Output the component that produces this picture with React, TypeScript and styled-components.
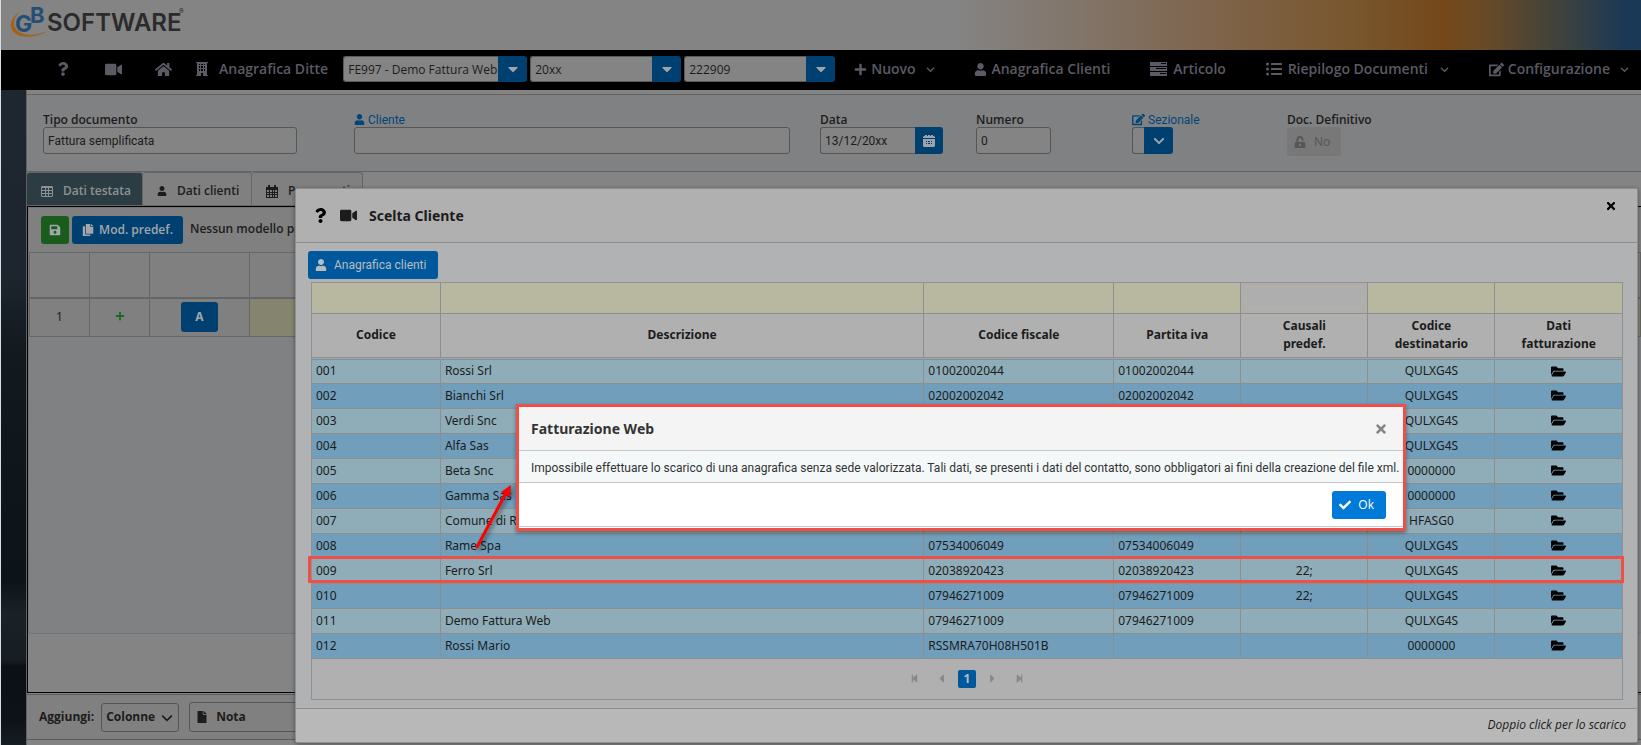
import React from 'react';
import styled, { createGlobalStyle, css } from 'styled-components';
import {
  FaQuestion, FaVideo, FaHome, FaPlus, FaUser, FaListUl, FaEdit,
  FaChevronDown, FaCaretDown, FaUnlockAlt, FaSave, FaCopy,
  FaFile, FaFolderOpen, FaCheck, FaTimes, FaStepBackward, FaStepForward, FaCaretLeft, FaCaretRight,
} from 'react-icons/fa';

const uiFont = 'Roboto, "Noto Sans", sans-serif';
const labelFont = '"Open Sans", "Noto Sans", sans-serif';
const dataFont = '"Noto Sans", "Open Sans", sans-serif';

const Global = createGlobalStyle`
  * { box-sizing: border-box; }
  html, body { margin: 0; }
  body {
    background: #848484;
    color: #1c1c1c;
    font: 12px/18px ${dataFont};
    overflow: hidden;
  }
  button, input, select { font: inherit; color: inherit; margin: 0; }
  button { cursor: pointer; }
  svg { flex: none; }
`;

const Page = styled.div`
  min-height: 100vh;
  display: flex;
  flex-direction: column;
  border-left: 1px solid #dadcde;
`;

const Banner = styled.header`
  height: 50px;
  padding: 4px 0 0 8px;
  background: linear-gradient(90deg, #848484 58%, #7f664f 73%, #78552c 83%, #74481a 88%, #6c4a24 90%, #40423c 95%, #1a3956 99%);
`;

const Nav = styled.nav`
  height: 40px;
  display: flex;
  align-items: center;
  background: #000;
  color: #5c5a64;
  padding: 0 12px 2px 55px;
  font-family: ${labelFont};
  font-size: 14px;
  font-weight: 600;
`;

const NavLink = styled.a<{ $gap?: number; $after?: number }>`
  display: flex;
  align-items: center;
  gap: ${p => p.$gap ?? 4}px;
  margin-right: ${p => p.$after ?? 0}px;
  color: inherit;
  text-decoration: none;
  white-space: nowrap;
`;

const NavGroup = styled.div`
  flex: 1;
  display: flex;
  justify-content: space-between;
  margin-left: 16px;
`;

const Chevron = styled.span`
  display: flex;
  margin-left: 6px;
`;

const Combo = styled.div<{ $w: number }>`
  display: flex;
  width: ${p => p.$w}px;
  height: 26px;
  margin-right: 3px;
  font-size: 12px;
  font-weight: 400;
  color: #1c1c1c;
`;

const ComboInput = styled.input`
  flex: 1;
  min-width: 0;
  padding: 2px 0 0 4px;
  border: 1px solid #5a5a5a;
  border-right: 0;
  border-radius: 3px 0 0 3px;
  background: #848484;
`;

const ComboButton = styled.button<{ $w?: number }>`
  width: ${p => p.$w ?? 29}px;
  padding: 0;
  display: flex;
  align-items: center;
  justify-content: center;
  border: 0;
  border-radius: 0 3px 3px 0;
  background: #004071;
  color: #a0a4a8;
`;

const Body = styled.div`
  flex: 1;
  display: flex;
`;

const Side = styled.aside`
  width: 25px;
  background: linear-gradient(180deg, #1e272f 0, #1d262e 28%, #12191f 40%, #0e151b 60%, #0c1319 75%, #1a2127 80%, #161d23 87%, #0a1016 88%, #0c1218 96%, #161d23 100%);
`;

const Main = styled.main`
  flex: 1;
  min-width: 0;
  display: flex;
  flex-direction: column;
  border-left: 1px solid #5e6163;
`;

const Form = styled.form`
  display: flex;
  height: 78px;
  margin-top: 4px;
  padding: 17px 0 0 16px;
  border: solid #636363;
  border-width: 1px 0;
  background: #808182;
`;

const Field = styled.div<{ $w: number; $after: number }>`
  width: ${p => p.$w}px;
  margin-right: ${p => p.$after}px;
`;

const Label = styled.label<{ $link?: boolean }>`
  display: flex;
  align-items: center;
  gap: 3px;
  height: 15px;
  white-space: nowrap;
  font-family: ${p => (p.$link ? uiFont : labelFont)};
  font-weight: ${p => (p.$link ? 400 : 600)};
  color: ${p => (p.$link ? '#00457c' : '#1c1c1c')};
`;

const inputBox = css`
  height: 27px;
  border: 1px solid #565656;
  border-radius: 3px;
  background: #848484;
`;

const TextInput = styled.input`
  ${inputBox}
  width: 100%;
  padding: 0 4px;
  font-family: ${uiFont};
`;

const Joined = styled.div`
  display: flex;
  & > input { flex: 1; min-width: 0; border-right: 0; border-radius: 3px 0 0 3px; }
`;

const Toggle = styled.button`
  display: flex;
  align-items: center;
  gap: 8px;
  width: 54px;
  height: 29px;
  padding: 0 7px;
  border: 0;
  border-radius: 3px;
  background: #787878;
  color: #565656;
`;

const Tabs = styled.div`
  display: flex;
  height: 34px;
`;

const Tab = styled.button<{ $active?: boolean; $w: number }>`
  display: flex;
  align-items: center;
  gap: 10px;
  width: ${p => p.$w}px;
  padding: 4px 0 0 14px;
  border: 1px solid #666;
  border-left: 0;
  border-radius: 3px 3px 0 0;
  background: ${p => (p.$active ? '#2b3d43' : '#808080')};
  color: ${p => (p.$active ? '#8c9294' : '#1c1c1c')};
  font-family: ${labelFont};
  font-weight: 600;
  white-space: nowrap;
`;

const Panel = styled.section`
  height: 487px;
  border: 1px solid #000;
  border-right: 0;
  background: #848484;
`;

const Inner = styled.div`
  height: 427px;
  border: 1px solid #747474;
  border-right: 0;
  border-radius: 3px;
  background: #808182;
`;

const Tools = styled.div`
  display: flex;
  gap: 3px;
  height: 44px;
  padding: 8px 12px;
  background: #808080;
  font-family: ${labelFont};
  font-weight: 600;
`;

const ToolButton = styled.button<{ $green?: boolean; $w: number }>`
  display: flex;
  align-items: center;
  justify-content: center;
  gap: 5px;
  width: ${p => p.$w}px;
  height: 28px;
  padding: 0;
  border: 0;
  border-radius: 3px;
  background: ${p => (p.$green ? '#1a5c1c' : '#004071')};
  color: #a3a7ab;
  font-weight: 600;
  white-space: nowrap;
`;

const ToolText = styled.span`
  margin-left: 4px;
  line-height: 26px;
  white-space: nowrap;
`;

const Grid = styled.table`
  width: 100%;
  table-layout: fixed;
  border-collapse: collapse;
  background: #808080;
  th, td { border: 1px solid #666; padding: 0; text-align: center; }
  th { height: 45px; border-bottom-width: 2px; }
  td { height: 39px; }
  td:last-child { background: #84846f; }
`;

const RowButton = styled.button`
  width: 37px;
  height: 30px;
  border: 0;
  border-radius: 3px;
  background: #004071;
  color: #a3a7ab;
  font-weight: 700;
`;

const AddBar = styled.footer`
  display: flex;
  align-items: center;
  height: 46px;
  margin-top: 1px;
  padding-left: 12px;
  border: solid #5c5c5c;
  border-width: 1px 0;
  background: #808080;
  font-family: ${labelFont};
  font-weight: 700;
`;

const OutlineSelect = styled.div`
  position: relative;
  width: 78px;
  margin: 0 10px 0 7px;
  & > svg { position: absolute; right: 6px; top: 9px; pointer-events: none; }
  & > select {
    width: 100%;
    height: 29px;
    padding: 0 4px;
    appearance: none;
    border: 1px solid #555;
    border-radius: 3px;
    background: transparent;
  }
`;

const OutlineButton = styled.button`
  display: flex;
  align-items: center;
  gap: 8px;
  width: 160px;
  height: 30px;
  padding: 0 6px;
  border: 1px solid #555;
  border-radius: 3px;
  background: transparent;
  font-weight: 700;
`;

const Modal = styled.section`
  position: absolute;
  left: 295px;
  right: 3px;
  top: 188px;
  display: flex;
  flex-direction: column;
  border: 1px solid #8f8f8f;
  border-radius: 3px;
  background: #b1b2b4;
  box-shadow: 0 1px 4px #0006;
`;

const ModalHead = styled.header`
  display: flex;
  align-items: center;
  gap: 12px;
  height: 54px;
  padding: 0 20px 0 17px;
  border-bottom: 1px solid #8e8e8e;
  background: #b0b0b0;
`;

const Title = styled.h2`
  flex: 1;
  margin: 0;
  font-size: 14px;
  font-weight: 700;
`;

const IconButton = styled.button<{ $top?: boolean }>`
  display: flex;
  align-self: ${p => (p.$top ? 'flex-start' : 'center')};
  padding: ${p => (p.$top ? '11px 0 0' : '0')};
  border: 0;
  background: none;
`;

const ModalBody = styled.div`
  padding: 8px 14px 8px 12px;
`;

const PrimaryButton = styled.button<{ $bright?: boolean }>`
  display: flex;
  align-items: center;
  gap: 7px;
  height: 28px;
  padding: 0 12px 0 7px;
  border: 0;
  border-radius: 3px;
  background: ${p => (p.$bright ? '#007ad9' : '#00589c')};
  color: ${p => (p.$bright ? '#fff' : '#b8bcc0')};
  font-family: ${p => (p.$bright ? labelFont : uiFont)};
`;

const TableWrap = styled.div`
  margin: 3px 0 0 3px;
  border: 1px solid #919191;
  background: #b0b0b0;
`;

const Table = styled.table`
  width: 100%;
  table-layout: fixed;
  border-collapse: collapse;
  th, td { padding: 0; border: 1px solid #8e8e8e; }
  tr > :first-child { border-left: 0; }
  tr > :last-child { border-right: 0; }
  thead tr:first-child > * { border-top: 0; }
  th { height: 45px; font-weight: 700; }
  thead tr:last-child th { border-bottom: 3px double #8e8e8e; }
`;

const FilterCell = styled.td<{ $plain?: boolean }>`
  height: 30px;
  background: ${p => (p.$plain ? '#aeaeae' : '#b8b7a0')};
`;

const FilterInput = styled.input<{ $plain?: boolean }>`
  display: block;
  width: calc(100% - 8px);
  height: 23px;
  margin: 0 auto;
  border: 1px solid ${p => (p.$plain ? '#b6b4a0' : 'transparent')};
  border-radius: 3px;
  background: transparent;
`;

const Row = styled.tr<{ $alt: boolean }>`
  background: ${p => (p.$alt ? '#719eba' : '#8eadb8')};
`;

const Cell = styled.td<{ $center?: boolean }>`
  height: 25px;
  && { padding: 0 4px; }
  text-align: ${p => (p.$center ? 'center' : 'left')};
  & > svg { display: block; margin: 0 auto; color: #000; }
`;

const Pager = styled.div`
  display: flex;
  align-items: center;
  justify-content: center;
  height: 40px;
  gap: 16px;
  color: #888;
`;

const PageNumber = styled.button`
  width: 18px;
  height: 18px;
  margin: 0 -6px;
  padding: 0;
  border: 0;
  border-radius: 2px;
  background: #00589c;
  color: #b8bcc0;
  font-weight: 700;
`;

const ModalFoot = styled.footer`
  height: 34px;
  padding: 7px 11px;
  border-top: 1px solid #8e8e8e;
  background: #b8b8b8;
  text-align: right;
  font-family: ${labelFont};
  font-style: italic;
`;

const Highlight = styled.div`
  position: absolute;
  left: 12px;
  right: 13px;
  top: 367px;
  height: 27px;
  border: 3px solid #ee4f49;
  pointer-events: none;
`;

const Alert = styled.section`
  position: absolute;
  left: 220px;
  top: 215px;
  width: 890px;
  border: 3px solid #ee4f49;
  background: #fff;
  color: #333;
  box-shadow: 0 2px 4px #0006;
`;

const AlertHead = styled.header`
  display: flex;
  align-items: center;
  height: 44px;
  padding: 0 15px 0 12px;
  border-bottom: 1px solid #c8c8c8;
  background: #f4f4f4;
`;

const AlertText = styled.p`
  margin: 0;
  padding: 8px 0 5px 12px;
  border-bottom: 1px solid #c8c8c8;
  background: #f4f8f9;
  font-family: ${uiFont};
  white-space: nowrap;
`;

const AlertFoot = styled.footer`
  display: flex;
  justify-content: flex-end;
  padding: 8px 17px 7px;
  margin-bottom: 1px;
  border-bottom: 1px solid #c8c8c8;
`;

const Arrow = styled.svg`
  position: absolute;
  left: 174px;
  top: 292px;
  filter: drop-shadow(2px 2px 2px #0007);
  pointer-events: none;
`;

const Logo = () => (
  <svg width="182" height="38" viewBox="9 4 182 38" role="img" aria-label="GB Software">
    <path d="M20 12C12 16 9 24 12 30c5 9 24 9 37 0C38 36 22 37 16 29c-4-5-2-12 4-17z" fill="#a5601a" />
    <text x="15" y="32" fontFamily="Inter, sans-serif" fontWeight="700" fontSize="23" fill="#254e75">G</text>
    <text x="30" y="23" fontFamily="Inter, sans-serif" fontWeight="700" fontSize="22" fill="#254e75">B</text>
    <text x="47" y="31" fontFamily="Inter, sans-serif" fontWeight="600" fontSize="24" fill="#2b2b2c">SOFTWARE</text>
    <text x="179" y="14" fontFamily="Inter, sans-serif" fontWeight="700" fontSize="7" fill="#2b2b2c">®</text>
  </svg>
);

const TasksIcon = () => (
  <svg width="17" height="14" viewBox="0 0 17 14" fill="currentColor">
    <path fillRule="evenodd" d="M0 0h17v4H0zM11 1v1h5V1zM0 5h17v4H0zM6 6v1h10V6zM0 10h17v4H0zM10 11v1h6v-1z" />
  </svg>
);

const BuildingIcon = () => (
  <svg width="12" height="14" viewBox="0 0 12 14" fill="currentColor">
    <path fillRule="evenodd" d="M0 0h12v1h-1v12h1v1H7v-3H5v3H0v-1h1V1H0zM3 2v1h1V2zM5 2v1h2V2zM8 2v1h1V2zM3 4v2h1V4zM5 4v2h2V4zM8 4v2h1V4zM3 7v2h1V7zM5 7v2h2V7zM8 7v2h1V7z" />
  </svg>
);

const TableIcon = () => (
  <svg width="12" height="11" viewBox="0 0 12 11" fill="currentColor">
    <path fillRule="evenodd" d="M1 0h10l1 1v9l-1 1H1l-1-1V1zM1 2v2h3V2zM5 2v2h2V2zM8 2v2h3V2zM1 5v2h3V5zM5 5v2h2V5zM8 5v2h3V5zM1 8v2h3V8zM5 8v2h2V8zM8 8v2h3V8z" />
  </svg>
);

const CalendarIcon = () => (
  <svg width="12" height="13" viewBox="0 0 12 13" fill="currentColor">
    <path fillRule="evenodd" d="M2 0h2v2h4V0h2v2h2v11H0V2h2zM1 5v2h2V5zM4 5v2h2V5zM7 5v2h1V5zM9 5v2h2V5zM1 8v1h2V8zM4 8v1h2V8zM7 8v1h1V8zM9 8v1h2V8zM1 10v2h2v-2zM4 10v2h2v-2zM7 10v2h1v-2zM9 10v2h2v-2z" />
  </svg>
);

const SolidCalendarIcon = () => (
  <svg width="12" height="12" viewBox="0 0 12 12" fill="currentColor">
    <path fillRule="evenodd" d="M2 0h2v1h1V0h2v1h1V0h2v1h1l1 1v1H0V2l1-1h1zM0 4h12v7l-1 1H1l-1-1zM3 6v1h1V6zM5 6v1h2V6zM8 6v1h1V6zM3 8v1h1V8zM5 8v1h2V8zM8 8v1h1V8z" />
  </svg>
);

const Down = ({ size = 9 }: { size?: number }) => (
  <svg width={size} height={size} viewBox="0 0 10 10" fill="none" stroke="currentColor" strokeWidth="1.4">
    <path d="M1 3l4 4 4-4" />
  </svg>
);

const rows = [
  ['001', 'Rossi Srl', '01002002044', '01002002044', '', 'QULXG4S'],
  ['002', 'Bianchi Srl', '02002002042', '02002002042', '', 'QULXG4S'],
  ['003', 'Verdi Snc', '', '', '', 'QULXG4S'],
  ['004', 'Alfa Sas', '', '', '', 'QULXG4S'],
  ['005', 'Beta Snc', '', '', '', '0000000'],
  ['006', 'Gamma Sas', '', '', '', '0000000'],
  ['007', 'Comune di R', '', '', '', 'HFASG0'],
  ['008', 'Rame Spa', '07534006049', '07534006049', '', 'QULXG4S'],
  ['009', 'Ferro Srl', '02038920423', '02038920423', '22;', 'QULXG4S'],
  ['010', '', '07946271009', '07946271009', '22;', 'QULXG4S'],
  ['011', 'Demo Fattura Web', '07946271009', '07946271009', '', 'QULXG4S'],
  ['012', 'Rossi Mario', 'RSSMRA70H08H501B', '', '', '0000000'],
];

const columns = ['Codice', 'Descrizione', 'Codice fiscale', 'Partita iva', 'Causali predef.', 'Codice destinatario', 'Dati fatturazione'];
const breaks = (t: string, i: number) => (i < 4 ? t : t.split(' ').map((w, k) => <React.Fragment key={w}>{k > 0 && <br />}{w}</React.Fragment>));

const NavCombo = ({ value, w, label }: { value: string; w: number; label: string }) => (
  <Combo $w={w}>
    <ComboInput defaultValue={value} aria-label={label} />
    <ComboButton type="button" aria-label={`Apri ${label}`}><FaCaretDown size={16} /></ComboButton>
  </Combo>
);

const ClientModal = () => (
  <Modal role="dialog" aria-label="Scelta Cliente">
    <ModalHead>
      <FaQuestion size={15} color="#000" />
      <FaVideo size={17} />
      <Title>Scelta Cliente</Title>
      <IconButton $top aria-label="Chiudi"><FaTimes size={12} color="#000" /></IconButton>
    </ModalHead>
    <ModalBody>
      <PrimaryButton><FaUser size={12} />Anagrafica clienti</PrimaryButton>
      <TableWrap>
        <Table>
          <colgroup>
            <col style={{ width: '9.8%' }} /><col /><col style={{ width: '14.5%' }} /><col style={{ width: '9.7%' }} />
            <col style={{ width: '9.7%' }} /><col style={{ width: '9.7%' }} /><col style={{ width: '9.7%' }} />
          </colgroup>
          <thead>
            <tr>
              {columns.map((c, i) => (
                <FilterCell key={c} $plain={i === 4}><FilterInput $plain={i === 4} aria-label={`Filtra ${c}`} /></FilterCell>
              ))}
            </tr>
            <tr>{columns.map((c, i) => <th key={c}>{breaks(c, i)}</th>)}</tr>
          </thead>
          <tbody>
            {rows.map((r, i) => (
              <Row key={r[0]} $alt={i % 2 === 1}>
                {r.map((v, k) => <Cell key={k} $center={k > 3}>{v}</Cell>)}
                <Cell $center><FaFolderOpen size={15} /></Cell>
              </Row>
            ))}
          </tbody>
        </Table>
        <Pager>
          <FaStepBackward size={9} /><FaCaretLeft size={13} />
          <PageNumber>1</PageNumber>
          <FaCaretRight size={13} /><FaStepForward size={9} />
        </Pager>
      </TableWrap>
    </ModalBody>
    <ModalFoot>Doppio click per lo scarico</ModalFoot>
    <Highlight />
    <Alert role="alertdialog" aria-label="Fatturazione Web">
      <AlertHead>
        <Title>Fatturazione Web</Title>
        <IconButton aria-label="Chiudi avviso"><FaTimes size={14} color="#848484" /></IconButton>
      </AlertHead>
      <AlertText>Impossibile effettuare lo scarico di una anagrafica senza sede valorizzata. Tali dati, se presenti i dati del contatto, sono obbligatori ai fini della creazione del file xml.</AlertText>
      <AlertFoot><PrimaryButton $bright><FaCheck size={12} />Ok</PrimaryButton></AlertFoot>
    </Alert>
    <Arrow width="50" height="70" viewBox="0 0 50 70">
      <path d="M7 66L36 12" stroke="#f00" strokeWidth="3" strokeLinecap="round" />
      <path d="M41 4l-1 12-9-5z" fill="#f00" />
    </Arrow>
  </Modal>
);

export default function App() {
  return (
    <Page>
      <Global />
      <Banner><Logo /></Banner>
      <Nav>
        <NavLink href="#" $after={35} aria-label="Aiuto"><FaQuestion size={14} /></NavLink>
        <NavLink href="#" $after={33} aria-label="Video"><FaVideo size={17} /></NavLink>
        <NavLink href="#" $after={24} aria-label="Home"><FaHome size={17} /></NavLink>
        <NavLink href="#" $gap={11} $after={15}><BuildingIcon />Anagrafica Ditte</NavLink>
        <NavCombo value="FE997 - Demo Fattura Web" w={184} label="Ditta" />
        <NavCombo value="20xx" w={151} label="Anno" />
        <NavCombo value="222909" w={151} label="Codice" />
        <NavGroup>
          <NavLink href="#"><FaPlus size={13} />Nuovo<Chevron><Down /></Chevron></NavLink>
          <NavLink href="#"><FaUser size={13} />Anagrafica Clienti</NavLink>
          <NavLink href="#" $gap={6}><TasksIcon />Articolo</NavLink>
          <NavLink href="#" $gap={6}><FaListUl size={16} />Riepilogo Documenti<Chevron><Down /></Chevron></NavLink>
          <NavLink href="#"><FaEdit size={15} />Configurazione<Chevron><Down /></Chevron></NavLink>
        </NavGroup>
      </Nav>
      <Body>
        <Side />
        <Main>
          <Form>
            <Field $w={254} $after={57}>
              <Label htmlFor="tipo">Tipo documento</Label>
              <TextInput id="tipo" defaultValue="Fattura semplificata" />
            </Field>
            <Field $w={436} $after={30}>
              <Label htmlFor="cliente" $link><FaUser size={11} />Cliente</Label>
              <TextInput id="cliente" />
            </Field>
            <Field $w={123} $after={33}>
              <Label htmlFor="data">Data</Label>
              <Joined>
                <TextInput id="data" defaultValue="13/12/20xx" />
                <ComboButton type="button" $w={28} aria-label="Calendario"><SolidCalendarIcon /></ComboButton>
              </Joined>
            </Field>
            <Field $w={75} $after={81}>
              <Label htmlFor="numero">Numero</Label>
              <TextInput id="numero" defaultValue="0" />
            </Field>
            <Field $w={41} $after={114}>
              <Label htmlFor="sezionale" $link><FaEdit size={13} />Sezionale</Label>
              <Joined>
                <TextInput id="sezionale" />
                <ComboButton type="button" aria-label="Apri sezionale"><FaChevronDown size={12} /></ComboButton>
              </Joined>
            </Field>
            <Field $w={90} $after={0}>
              <Label htmlFor="definitivo">Doc. Definitivo</Label>
              <Toggle id="definitivo" type="button"><FaUnlockAlt size={12} />No</Toggle>
            </Field>
          </Form>
          <Tabs>
            <Tab $w={116} $active><TableIcon />Dati testata</Tab>
            <Tab $w={109}><FaUser size={10} />Dati clienti</Tab>
            <Tab $w={111}><CalendarIcon />Pagamenti</Tab>
          </Tabs>
          <Panel>
            <Inner>
              <Tools>
                <ToolButton $green $w={28} aria-label="Salva"><FaSave size={12} /></ToolButton>
                <ToolButton $w={111}><FaCopy size={12} />Mod. predef.</ToolButton>
                <ToolText>Nessun modello predefinito</ToolText>
              </Tools>
              <Grid>
                <colgroup><col style={{ width: 60 }} /><col style={{ width: 60 }} /><col style={{ width: 100 }} /><col /></colgroup>
                <thead><tr><th /><th /><th /><th /></tr></thead>
                <tbody>
                  <tr>
                    <td>1</td>
                    <td><FaPlus size={10} color="#1c6b24" /></td>
                    <td><RowButton>A</RowButton></td>
                    <td />
                  </tr>
                </tbody>
              </Grid>
            </Inner>
          </Panel>
          <AddBar>
            <label htmlFor="colonne">Aggiungi:</label>
            <OutlineSelect>
              <select id="colonne"><option>Colonne</option></select>
              <Down size={12} />
            </OutlineSelect>
            <OutlineButton><FaFile size={12} />Nota</OutlineButton>
          </AddBar>
        </Main>
      </Body>
      <ClientModal />
    </Page>
  );
}
